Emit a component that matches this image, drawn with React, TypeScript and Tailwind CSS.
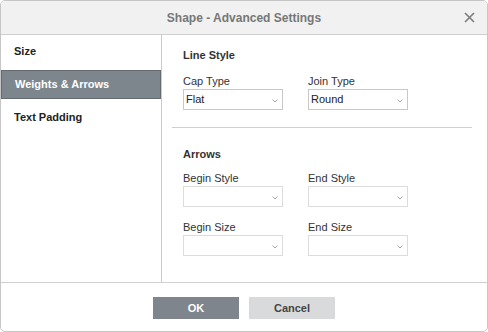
import React from "react"

const Chevron = () => (
  <svg width="6" height="4" viewBox="0 0 6 4" className="absolute right-[4px] top-[9px]">
    <path d="M0.5 0.5 L3 3 L5.5 0.5" fill="none" stroke="#a5a5a5" strokeWidth="1" />
  </svg>
)

const Select = ({ value, disabled }: { value?: string; disabled?: boolean }) => (
  <div
    className={`relative h-[21px] w-[100px] border bg-white pl-[2px] text-[11px] leading-[19px] text-[#222] ${
      disabled ? "border-[#dcdcdc]" : "border-[#c8c8c8]"
    }`}
  >
    {value}
    <Chevron />
  </div>
)

const Field = ({ label, value, disabled }: { label: string; value?: string; disabled?: boolean }) => (
  <div className="flex flex-col">
    <span className="h-[14px] text-[11px] leading-[14px] text-[#333]">{label}</span>
    <div className="mt-[1px]">
      <Select value={value} disabled={disabled} />
    </div>
  </div>
)

const navItems = ["Size", "Weights & Arrows", "Text Padding"]

export default function App() {
  return (
    <div className="h-[332px] w-[488px] bg-white font-['Liberation_Sans',Arial,sans-serif]">
      <div className="flex h-full w-full flex-col overflow-hidden rounded-[5px] border border-[#c6c6c6]">
        <div className="relative flex h-[34px] shrink-0 items-center justify-center border-b border-[#cfcfcf] bg-[#f1f1f1]">
          <span className="text-[12px] font-bold text-[#777]">Shape - Advanced Settings</span>
          <svg
            width="11"
            height="11"
            viewBox="0 0 11 11"
            className="absolute right-[12px] top-[11px]"
          >
            <path d="M1 1 L10 10 M10 1 L1 10" stroke="#7b7b7b" strokeWidth="1.6" />
          </svg>
        </div>

        <div className="flex flex-1">
          <div className="flex w-[161px] shrink-0 flex-col gap-[4px] border-r border-[#cbcbcb] pt-[2px]">
            {navItems.map((item) => (
              <div
                key={item}
                className={`flex h-[29px] items-center px-[13px] text-[11px] font-bold ${
                  item === "Weights & Arrows"
                    ? "border border-[#646b71] bg-[#7e868d] px-[12px] text-white"
                    : "text-[#222]"
                }`}
              >
                {item}
              </div>
            ))}
          </div>

          <div className="flex flex-1 flex-col pt-[13px]">
            <div className="pl-[21px]">
              <span className="block h-[14px] text-[11px] font-bold leading-[14px] text-[#333]">
                Line Style
              </span>
              <div className="mt-[12px] flex gap-[25px]">
                <Field label="Cap Type" value="Flat" />
                <Field label="Join Type" value="Round" />
              </div>
            </div>

            <div className="ml-[10px] mr-[15px] mt-[17px] h-px bg-[#cfcfcf]" />

            <div className="mt-[19px] pl-[21px]">
              <span className="block h-[14px] text-[11px] font-bold leading-[14px] text-[#333]">
                Arrows
              </span>
              <div className="mt-[10px] flex gap-[25px]">
                <Field label="Begin Style" disabled />
                <Field label="End Style" disabled />
              </div>
              <div className="mt-[13px] flex gap-[25px]">
                <Field label="Begin Size" disabled />
                <Field label="End Size" disabled />
              </div>
            </div>
          </div>
        </div>

        <div className="flex h-[49px] shrink-0 justify-center gap-[10px] border-t border-[#cfcfcf] pt-[14px]">
          <button className="h-[22px] w-[86px] bg-[#7e858c] text-[11px] font-bold text-white">OK</button>
          <button className="h-[22px] w-[86px] bg-[#d9dadc] text-[11px] font-bold text-[#444]">
            Cancel
          </button>
        </div>
      </div>
    </div>
  )
}
